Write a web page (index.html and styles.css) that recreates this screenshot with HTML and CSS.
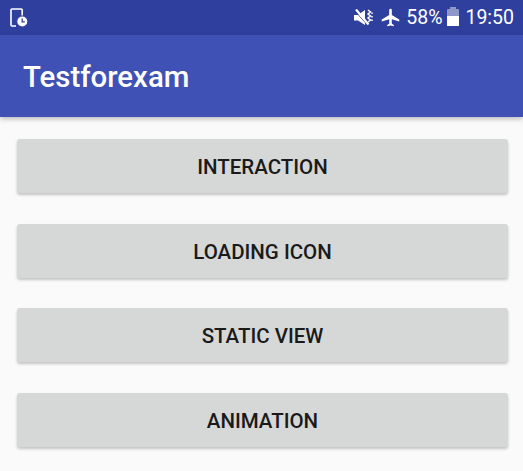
FILE: index.html
```html
<!DOCTYPE html>
<html lang="en">
<head>
    <meta charset="UTF-8">
    <meta name="viewport" content="width=device-width, initial-scale=1.0">
    <title>Testforexam</title>
    <link rel="stylesheet" href="styles.css">
</head>
<body>
    <div class="status-bar">
        <svg class="icon-alarm" width="18" height="20" viewBox="0 0 18 20">
            <path d="M12.200 7.500V2a1 1 0 0 0-1-1H2a1 1 0 0 0-1 1v15a1 1 0 0 0 1 1H6" fill="none" stroke="#fff" stroke-width="1.600"/>
            <circle cx="12.300" cy="13.500" r="5" fill="#fff"/>
            <path d="M12.200 10.500v3.300h2.600" fill="none" stroke="#2f3f9e" stroke-width="1.300"/>
        </svg>
        <div class="status-right">
            <svg class="icon-mute" width="20" height="18" viewBox="0 0 20 18">
                <path d="M0 6h4L11 1v15L4 11.500H0z" fill="#fff"/>
                <path d="M0.500 1.500l13 14.500" stroke="#2f3f9e" stroke-width="1"/>
                <path d="M2 0.500l12.500 15" stroke="#fff" stroke-width="2.200"/>
                <path d="M14 1l2.500 2-2.500 2 2.500 2-2.500 2 2.500 2-2.500 2" fill="none" stroke="#fff" stroke-width="1.500"/>
                <path d="M18 3.500v1.500M18 7v1.500M18 10.500v1.500" stroke="#fff" stroke-width="1.500"/>
            </svg>
            <svg class="icon-plane" width="21" height="21" viewBox="0 0 24 24">
                <path d="M22 16.500v-2.300l-8.500-5V3.500a1.500 1.500 0 0 0-3 0v5.700l-8.500 5v2.300l8.500-2.500V19l-2.300 1.500V22l3.800-1 3.800 1v-1.500L13.500 19v-5z" fill="#fff"/>
            </svg>
            <span class="battery-text">58%</span>
            <div class="battery"><div class="battery-fill"></div></div>
            <span class="clock">19:50</span>
        </div>
    </div>
    <div class="app-bar">Testforexam</div>
    <div class="content">
        <button class="btn" type="button">INTERACTION</button>
        <button class="btn" type="button">LOADING ICON</button>
        <button class="btn" type="button">STATIC VIEW</button>
        <button class="btn" type="button">ANIMATION</button>
    </div>
</body>
</html>
```
FILE: styles.css
```css
* {
    padding: 0;
    margin: 0;
    box-sizing: border-box;
}
body {
    width: 523px;
    height: 471px;
    overflow: hidden;
    background-color: #fafafa;
    font-family: Roboto, "Liberation Sans", sans-serif;
}
.status-bar {
    height: 35px;
    display: flex;
    align-items: center;
    justify-content: space-between;
    padding: 0 9px 0 10px;
    background-color: #2f3f9e;
    color: #fff;
}
.status-right {
    display: flex;
    align-items: center;
}
.icon-mute {
    margin-right: 6px;
}
.icon-plane {
    margin-right: 5px;
}
.battery-text {
    font-size: 19.500px;
    margin-right: 5px;
}
.battery {
    position: relative;
    width: 12px;
    height: 17px;
    margin-right: 6px;
    background-color: #8f97c9;
    border-radius: 1px;
}
.battery::before {
    content: "";
    position: absolute;
    top: -2px;
    left: 3px;
    width: 6px;
    height: 2px;
    background-color: #8f97c9;
}
.battery-fill {
    position: absolute;
    left: 0;
    right: 0;
    bottom: 0;
    height: 10px;
    background-color: #fff;
}
.clock {
    font-size: 19.500px;
}
.app-bar {
    height: 82px;
    display: flex;
    align-items: center;
    padding: 2px 0 0 23px;
    background-color: #3f51b5;
    color: #fff;
    font-size: 29.400px;
    font-weight: 500;
    box-shadow: 0 2px 5px rgba(0, 0, 0, 0.25);
}
.content {
    display: flex;
    flex-direction: column;
    gap: 30.600px;
    padding: 22px 15px 0 17px;
}
.btn {
    height: 54px;
    padding-top: 2px;
    border: none;
    border-radius: 3px;
    background-color: #d6d7d7;
    color: #1a1a1a;
    font-family: Roboto, "Liberation Sans", sans-serif;
    font-size: 20.500px;
    font-weight: 500;
    box-shadow: 0 2px 3px rgba(0, 0, 0, 0.22);
}
```
